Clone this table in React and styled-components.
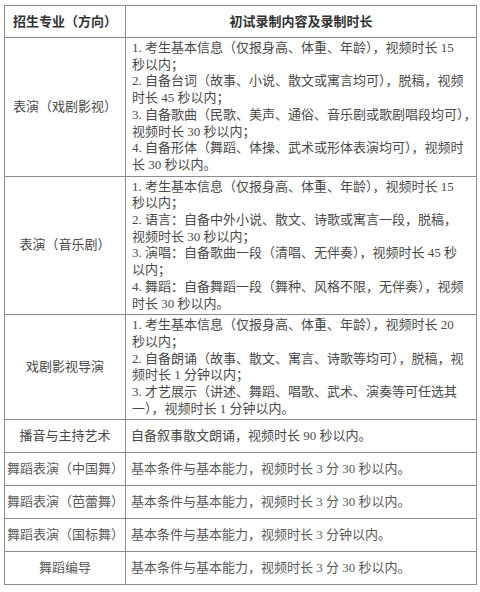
import React from 'react'
import styled, { createGlobalStyle } from 'styled-components'

const GlobalStyle = createGlobalStyle`
  html, body {
    margin: 0;
    padding: 0;
    background: #fff;
  }
`;

const Page = styled.div`
  padding: 5px 4px;
  font-family: "Liberation Serif", "Noto Sans CJK SC", serif;
  font-size: 13px;
  color: #4a4a4a;
`;

const Table = styled.table`
  width: 472px;
  border-collapse: collapse;
  table-layout: fixed;
  border: 1px solid #8c8c8c;

  & col.major { width: 121px; }
  & col.content { width: 351px; }
`;

const HeadCell = styled.th`
  height: 31px;
  padding: 0 4px;
  border: 1px solid #8c8c8c;
  font-weight: bold;
  color: #333;
  line-height: 16px;
  text-align: center;
  vertical-align: middle;
`;

const MajorCell = styled.td`
  border: 1px solid #8c8c8c;
  padding: 0 2px;
  text-align: center;
  vertical-align: middle;
  white-space: nowrap;
  line-height: 16px;
  color: ${props => props.light ? '#5a5a5a' : '#4a4a4a'};
`;

const ContentCell = styled.td`
  border: 1px solid #8c8c8c;
  height: ${props => props.single ? '28px' : 'auto'};
  padding: ${props => props.single ? '2px 5px 2px 5px' : '2px 5px 2px 6px'};
  vertical-align: middle;
  line-height: 16.7px;
  color: ${props => props.light ? '#5a5a5a' : '#4a4a4a'};
`;

const Line = styled.span`
  display: block;
  white-space: nowrap;
`;

const rows = [
  {
    major: '表演（戏剧影视）',
    lines: [
      '1. 考生基本信息（仅报身高、体重、年龄），视频时长 15',
      '秒以内；',
      '2. 自备台词（故事、小说、散文或寓言均可），脱稿，视频',
      '时长 45 秒以内；',
      '3. 自备歌曲（民歌、美声、通俗、音乐剧或歌剧唱段均可），',
      '视频时长 30 秒以内；',
      '4. 自备形体（舞蹈、体操、武术或形体表演均可），视频时',
      '长 30 秒以内。',
    ],
  },
  {
    major: '表演（音乐剧）',
    lines: [
      '1. 考生基本信息（仅报身高、体重、年龄），视频时长 15',
      '秒以内；',
      '2. 语言：自备中外小说、散文、诗歌或寓言一段，脱稿，',
      '视频时长 30 秒以内；',
      '3. 演唱：自备歌曲一段（清唱、无伴奏），视频时长 45 秒',
      '以内；',
      '4. 舞蹈：自备舞蹈一段（舞种、风格不限，无伴奏），视频',
      '时长 30 秒以内。',
    ],
  },
  {
    major: '戏剧影视导演',
    lines: [
      '1. 考生基本信息（仅报身高、体重、年龄），视频时长 20',
      '秒以内；',
      '2. 自备朗诵（故事、散文、寓言、诗歌等均可），脱稿，视',
      '频时长 1 分钟以内；',
      '3. 才艺展示（讲述、舞蹈、唱歌、武术、演奏等可任选其',
      '一），视频时长 1 分钟以内。',
    ],
  },
  { major: '播音与主持艺术', lines: ['自备叙事散文朗诵，视频时长 90 秒以内。'] },
  { major: '舞蹈表演（中国舞）', lines: ['基本条件与基本能力，视频时长 3 分 30 秒以内。'], light: true },
  { major: '舞蹈表演（芭蕾舞）', lines: ['基本条件与基本能力，视频时长 3 分 30 秒以内。'], light: true },
  { major: '舞蹈表演（国标舞）', lines: ['基本条件与基本能力，视频时长 3 分钟以内。'], light: true },
  { major: '舞蹈编导', lines: ['基本条件与基本能力，视频时长 3 分 30 秒以内。'], light: true },
];

const App = () => {
  return (
    <Page>
      <GlobalStyle />
      <Table>
        <colgroup>
          <col className="major" />
          <col className="content" />
        </colgroup>
        <thead>
          <tr>
            <HeadCell>招生专业（方向）</HeadCell>
            <HeadCell>初试录制内容及录制时长</HeadCell>
          </tr>
        </thead>
        <tbody>
          {rows.map(row => (
            <tr key={row.major}>
              <MajorCell light={row.light}>{row.major}</MajorCell>
              <ContentCell single={row.lines.length === 1} light={row.light}>
                {row.lines.map((line, i) => <Line key={i}>{line}</Line>)}
              </ContentCell>
            </tr>
          ))}
        </tbody>
      </Table>
    </Page>
  )
}

export default App
